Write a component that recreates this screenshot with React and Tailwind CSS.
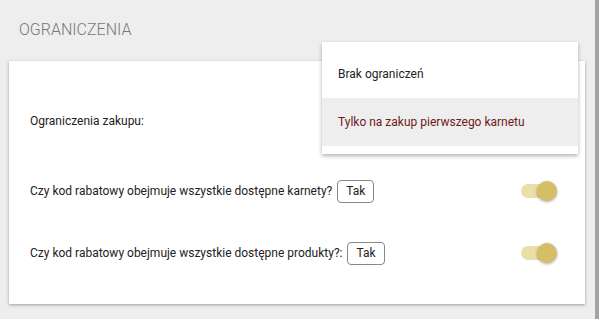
const Toggle = () => (
  <div className="relative w-[36px] h-[20px] flex items-center">
    <div className="w-[34px] h-[14px] rounded-full bg-[#ebdfa9]" />
    <div className="absolute right-0 top-0 w-[20px] h-[20px] rounded-full bg-[#d4bf66] shadow-[0_1px_3px_rgba(0,0,0,0.35)]" />
  </div>
);

const Row = ({ label }) => (
  <div className="flex items-center justify-between pr-[28px] h-[22px]">
    <div className="flex items-center gap-[5px]">
      <span>{label}</span>
      <span className="border border-[#888] rounded-[4px] h-[23px] px-[8px] flex items-center">Tak</span>
    </div>
    <Toggle />
  </div>
);

export default function App() {
  return (
    <div
      className="w-[599px] h-[319px] bg-[#eeeeee] flex text-[12px] text-[#222]"
      style={{ fontFamily: "Roboto, 'Liberation Sans', sans-serif" }}
    >
      <div className="flex-1 flex flex-col">
        <h2 className="pl-[19px] pt-[20px] h-[61px] text-[16px] leading-[20px] font-light text-[#777]">
          OGRANICZENIA
        </h2>
        <div className="relative ml-[9px] w-[576px] h-[243px] bg-white shadow-[0_1px_3px_rgba(0,0,0,0.35)] pl-[21px] pt-[51px]">
          <div className="h-[18px] flex items-center">Ograniczenia zakupu:</div>
          <div className="flex flex-col gap-[40px] mt-[50px]">
            <Row label="Czy kod rabatowy obejmuje wszystkie dostępne karnety?" />
            <Row label="Czy kod rabatowy obejmuje wszystkie dostępne produkty?:" />
          </div>
          <div className="absolute left-[313px] top-[-19px] w-[256px] bg-white py-[8px] shadow-[0_2px_4px_rgba(0,0,0,0.3)]">
            <div className="h-[48px] flex items-center pl-[16px] text-[#222]">Brak ograniczeń</div>
            <div className="h-[48px] flex items-center pl-[16px] bg-[#eeeeee] text-[#6e1a1a]">
              Tylko na zakup pierwszego karnetu
            </div>
          </div>
        </div>
      </div>
      <div className="w-[4px] h-full bg-[#a3a3a3]" />
    </div>
  );
}
